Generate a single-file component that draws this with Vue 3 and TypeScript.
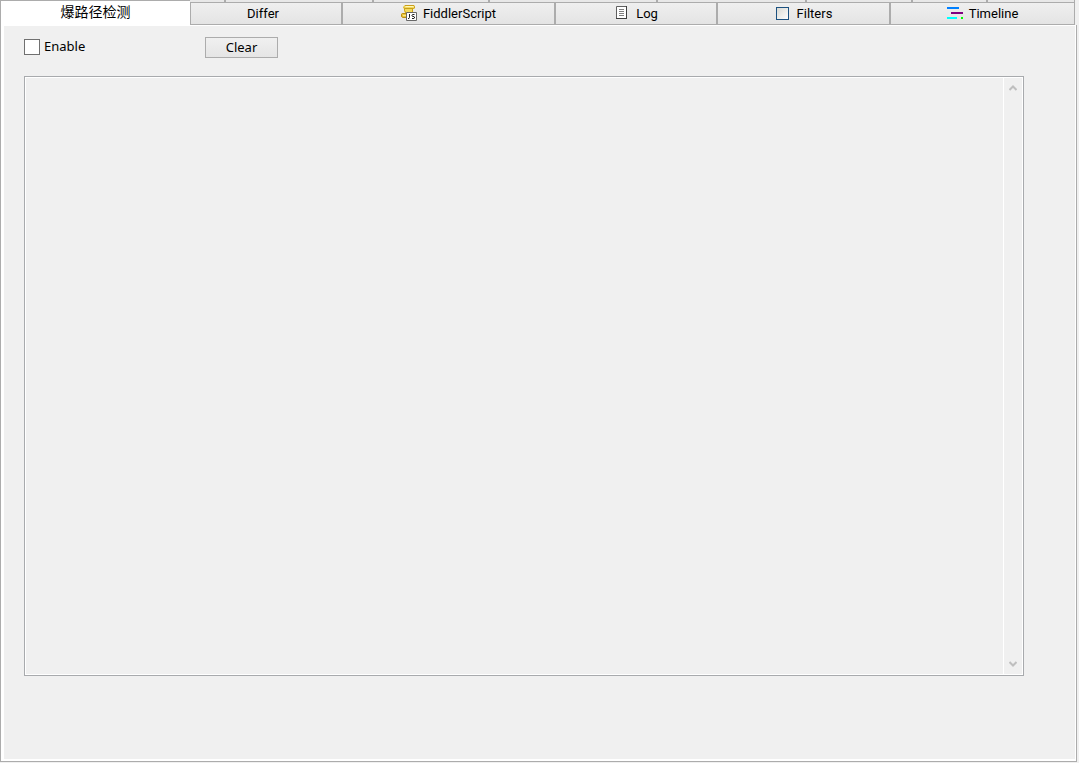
<script setup lang="ts">
import { ref } from 'vue'

interface Tab {
  id: string
  label: string
  span: number
}

const tabs: Tab[] = [
  { id: 'differ', label: 'Differ', span: 150 },
  { id: 'script', label: 'FiddlerScript', span: 211 },
  { id: 'log', label: 'Log', span: 160 },
  { id: 'filters', label: 'Filters', span: 171 },
  { id: 'timeline', label: 'Timeline', span: 183 },
]
const backTabs: number[] = [34, 146, 114, 166, 147, 104, 73, 86]

const enabled = ref(false)
const output = ref('')
</script>

<template>
  <div class="window">
    <div class="tabs" role="tablist">
      <button class="tab active" type="button" role="tab" aria-selected="true">爆路径检测</button>
      <div class="others">
        <div class="back-row" aria-hidden="true">
          <span v-for="(w, i) in backTabs" :key="i" class="back" :style="{ flexGrow: w }"></span>
        </div>
        <div class="front-row">
          <button
            v-for="tab in tabs"
            :key="tab.id"
            class="tab"
            type="button"
            role="tab"
            aria-selected="false"
            :style="{ flexGrow: tab.span }"
          >
            <svg v-if="tab.id === 'script'" class="icon" viewBox="0 0 16 16" aria-hidden="true">
              <path d="M2.500 1.500 3.500 .5H13L14 1.500V3L13 4H12V9H4.500L3 6V4L2 3z" fill="#f3da5c" />
              <path d="M1 8h5v5H2L0 11.500V9z" fill="#e9c53c" />
              <path d="M3 1.500 4 .500h9l.5 1v1.500L12.500 3.500H4L2.500 2.500" fill="none" stroke="#c99f1c" />
              <path d="M4.500 1.500h8" stroke="#fff7b8" />
              <path d="M3.500 3.500v2l1.500 2.500M11.500 4v3" fill="none" stroke="#c99f1c" />
              <path d="M5 8.500H1.500L.500 9.500v2l1.500 1h3" fill="none" stroke="#b98d14" />
              <path d="M2 10.500h3" stroke="#fbe98a" />
              <path d="M5.500 7.500h10v8h-10z" fill="#fff" stroke="#686868" />
              <path d="M8.500 9v3.500l-.5 1H7M13.500 9.500h-2l-.5.500v1l.5.500h1.500l.5.500v1l-.5.500h-2" fill="none" stroke="#222" />
            </svg>
            <svg v-else-if="tab.id === 'log'" class="icon" viewBox="0 0 16 16" aria-hidden="true">
              <path d="M2.500 1.500h10v12h-10z" fill="#fff" stroke="#606060" />
              <path d="M12.500 1v13M2 13.500h11" stroke="#404040" />
              <path d="M5 4.500h5M5 6.500h5M5 8.500h5M5 10.500h5" stroke="#808080" />
            </svg>
            <svg v-else-if="tab.id === 'filters'" class="icon" viewBox="0 0 16 16" aria-hidden="true">
              <defs>
                <linearGradient id="box-shade" x1="0" y1="0" x2="1" y2="1">
                  <stop offset="0" stop-color="#d8d8d2" />
                  <stop offset="1" stop-color="#fff" />
                </linearGradient>
              </defs>
              <rect x="1.500" y="2.500" width="12" height="12" fill="url(#box-shade)" stroke="#1c5180" />
            </svg>
            <svg v-else-if="tab.id === 'timeline'" class="icon" viewBox="0 0 16 16" aria-hidden="true">
              <path d="M0 2h12v2H0z" fill="#0080ff" />
              <path d="M4 7h12v2H4z" fill="#800080" />
              <path d="M0 12h10v2H0z" fill="#00ffff" />
              <path d="M14 12h2v2h-2z" fill="#00ff00" />
            </svg>
            <span class="label">{{ tab.label }}</span>
          </button>
        </div>
      </div>
    </div>

    <main class="panel">
      <div class="toolbar">
        <label class="enable">
          <input v-model="enabled" type="checkbox" />
          <span>Enable</span>
        </label>
        <button class="clear" type="button" @click="output = ''">Clear</button>
      </div>
      <div class="output">
        <textarea v-model="output" aria-label="Output"></textarea>
        <div class="scrollbar">
          <button type="button" aria-label="Scroll up">
            <svg viewBox="0 0 8 6" aria-hidden="true"><path d="M.5 5 4 1.500 7.500 5" /></svg>
          </button>
          <button type="button" aria-label="Scroll down">
            <svg viewBox="0 0 8 6" aria-hidden="true"><path d="M.5 1 4 4.500 7.500 1" /></svg>
          </button>
        </div>
      </div>
    </main>
  </div>
</template>

<style>
body {
  background: #f0f0f0;
}
</style>

<style scoped>
* {
  box-sizing: border-box;
}
.window {
  display: flex;
  flex-direction: column;
  min-height: 100vh;
  padding: 0 2px 1px 0;
  background: #f0f0f0;
  color: #000;
  font: 13px/18px "Noto Sans", "Noto Sans CJK SC", sans-serif;
}
button,
textarea {
  margin: 0;
  padding: 0;
  font: inherit;
  color: inherit;
  border-radius: 0;
}
.tabs {
  display: flex;
  height: 25px;
  padding-right: 2px;
}
.others {
  display: flex;
  flex: 885 1 0;
  flex-direction: column;
}
.back-row {
  display: flex;
  height: 2px;
}
.back {
  flex: 1 1 0;
  border: solid #acacac;
  border-width: 0 1px;
  background: #e8e8e8;
}
.back:first-child {
  border-left: 0;
}
.front-row {
  display: flex;
  flex: 1;
}
.tab {
  display: flex;
  flex: 1 1 0;
  align-items: center;
  justify-content: center;
  gap: 6px;
  min-width: 0;
  padding-bottom: 1px;
  border: 1px solid #acacac;
  background: linear-gradient(#efefef, #e4e4e4);
  font-family: Roboto, "Noto Sans CJK SC", sans-serif;
  white-space: nowrap;
}
.tab.active {
  flex-grow: 189;
  padding-bottom: 2px;
  border-right: 0;
  border-bottom: 0;
  background: #fff;
  font-size: 14px;
}
.label {
  padding-top: 2px;
}
.label:only-child {
  padding-right: 6px;
}
.icon {
  flex: none;
  width: 16px;
  height: 16px;
}
.panel {
  display: flex;
  flex: 1;
  flex-direction: column;
  padding: 11px 50px 85px 20px;
  border: solid #acacac;
  border-width: 0 1px 1px;
  box-shadow: inset 3px 0 #fff, inset -1px 0 #fff, inset 0 1px #fff, inset 0 -2px #fff;
}
.toolbar {
  display: flex;
  align-items: flex-start;
  height: 40px;
  padding-left: 3px;
}
.enable {
  display: flex;
  flex: none;
  align-items: center;
  gap: 4px;
  width: 181px;
  height: 20px;
}
.enable input {
  appearance: none;
  width: 16px;
  height: 16px;
  margin: 2px 0 0;
  border: 1px solid #707070;
  background: #fff;
}
.enable input:checked {
  box-shadow: inset 0 0 0 3px #fff;
  background: #333;
}
.clear {
  width: 73px;
  height: 21px;
  margin-top: 1px;
  padding-bottom: 1px;
  border: 1px solid #acacac;
  background: linear-gradient(#f0f0f0, #e5e5e5);
}
.output {
  display: flex;
  flex: 1;
  min-height: 80px;
  margin: 0 2px 0 3px;
  border: 1px solid #a8aaad;
  box-shadow: inset 0 0 0 1px #fff;
  padding: 1px;
}
.output textarea {
  flex: 1;
  min-width: 0;
  border: 0;
  background: transparent;
  resize: none;
  outline: 0;
}
.scrollbar {
  display: flex;
  flex-direction: column;
  justify-content: space-between;
  width: 19px;
  padding: 1px 0;
  border-left: 1px solid #fff;
}
.scrollbar button {
  display: flex;
  align-items: center;
  justify-content: center;
  height: 18px;
  border: 0;
  background: transparent;
}
.scrollbar svg {
  width: 8px;
  height: 6px;
  fill: none;
  stroke: #bfbfbf;
  stroke-width: 2;
}
</style>
